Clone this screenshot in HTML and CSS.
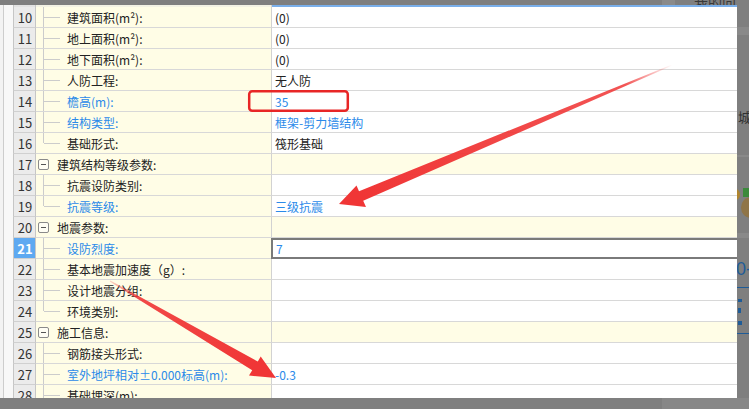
FILE: index.html
```html
<!DOCTYPE html>
<html lang="zh-CN">
<head>
<meta charset="utf-8">
<title>工程信息</title>
<link rel="stylesheet" href="styles.css">
</head>
<body>
<div class="backdrop">
  <div class="bg-top-block"></div>
  <span class="bg-title">我的问题</span>
  <div class="bg-band b1"></div>
  <span class="bg-glyph">城</span>
  <div class="bg-band b2"></div>
  <div class="bg-orange"></div>
  <div class="bg-green"></div>
  <div class="bg-brown"></div>
  <div class="bg-band b3"></div>
  <span class="bg-blue-text">0-</span>
  <div class="bg-line l1"></div>
  <div class="bg-icon i1"></div>
  <div class="bg-icon i2"></div>
  <div class="bg-icon i3"></div>
  <div class="bg-line l2"></div>
  <div class="bg-bottom"></div>
</div>

<div class="dialog">
  <div class="gutter"></div>
  <div class="sheet">
    <div class="row strip"><div class="num"></div><div class="label"></div><div class="value"></div></div>

    <div class="row"><div class="num">10</div><div class="label"><span class="branch"></span><span class="text">建筑面积(m²):</span></div><div class="value">(0)</div></div>
    <div class="row"><div class="num">11</div><div class="label"><span class="branch"></span><span class="text">地上面积(m²):</span></div><div class="value">(0)</div></div>
    <div class="row"><div class="num">12</div><div class="label"><span class="branch"></span><span class="text">地下面积(m²):</span></div><div class="value">(0)</div></div>
    <div class="row"><div class="num">13</div><div class="label"><span class="branch"></span><span class="text">人防工程:</span></div><div class="value">无人防</div></div>
    <div class="row"><div class="num">14</div><div class="label"><span class="branch"></span><span class="text blue">檐高(m):</span></div><div class="value blue">35</div></div>
    <div class="row"><div class="num">15</div><div class="label"><span class="branch"></span><span class="text blue">结构类型:</span></div><div class="value blue">框架-剪力墙结构</div></div>
    <div class="row"><div class="num">16</div><div class="label"><span class="branch last"></span><span class="text">基础形式:</span></div><div class="value">筏形基础</div></div>

    <div class="row group"><div class="num">17</div><div class="label"><span class="toggle"></span><span class="gtext">建筑结构等级参数:</span></div><div class="value"></div></div>
    <div class="row"><div class="num">18</div><div class="label"><span class="branch"></span><span class="text">抗震设防类别:</span></div><div class="value"></div></div>
    <div class="row"><div class="num">19</div><div class="label"><span class="branch last"></span><span class="text blue">抗震等级:</span></div><div class="value blue">三级抗震</div></div>

    <div class="row group"><div class="num">20</div><div class="label"><span class="toggle"></span><span class="gtext">地震参数:</span></div><div class="value"></div></div>
    <div class="row current"><div class="num">21</div><div class="label"><span class="branch"></span><span class="text blue">设防烈度:</span></div><div class="value editing blue">7</div></div>
    <div class="row"><div class="num">22</div><div class="label"><span class="branch"></span><span class="text">基本地震加速度（g）:</span></div><div class="value"></div></div>
    <div class="row"><div class="num">23</div><div class="label"><span class="branch"></span><span class="text">设计地震分组:</span></div><div class="value"></div></div>
    <div class="row"><div class="num">24</div><div class="label"><span class="branch last"></span><span class="text">环境类别:</span></div><div class="value"></div></div>

    <div class="row group"><div class="num">25</div><div class="label"><span class="toggle"></span><span class="gtext">施工信息:</span></div><div class="value"></div></div>
    <div class="row"><div class="num">26</div><div class="label"><span class="branch"></span><span class="text">钢筋接头形式:</span></div><div class="value"></div></div>
    <div class="row"><div class="num">27</div><div class="label"><span class="branch"></span><span class="text blue">室外地坪相对±0.000标高(m):</span></div><div class="value blue">-0.3</div></div>
    <div class="row"><div class="num">28</div><div class="label"><span class="branch"></span><span class="text">基础埋深(m):</span></div><div class="value"></div></div>
  </div>
</div>

<svg class="marks" width="749" height="409" viewBox="0 0 749 409" xmlns="http://www.w3.org/2000/svg">
  <defs>
    <linearGradient id="g1" gradientUnits="userSpaceOnUse" x1="672" y1="65" x2="361" y2="196">
      <stop offset="0" stop-color="#f03636" stop-opacity="0"/>
      <stop offset="0.15" stop-color="#f03636" stop-opacity="0.85"/>
      <stop offset="1" stop-color="#f03636" stop-opacity="1"/>
    </linearGradient>
    <linearGradient id="g2" gradientUnits="userSpaceOnUse" x1="110" y1="281" x2="255" y2="366">
      <stop offset="0" stop-color="#f03636" stop-opacity="0.2"/>
      <stop offset="0.2" stop-color="#f03636" stop-opacity="0.9"/>
      <stop offset="1" stop-color="#f03636" stop-opacity="1"/>
    </linearGradient>
  </defs>
  <rect x="249.2" y="91.2" width="98.6" height="19.6" rx="3" ry="3" fill="none" stroke="#e82626" stroke-width="2.5"/>
  <polygon fill="url(#g1)" points="339,204 356.5,185.5 359,191.2 672,64.5 672.4,65.5 363.2,200.8 366,207"/>
  <polygon fill="url(#g2)" points="276,378 260.7,356.5 257.8,361.6 110.3,280.5 109.7,281.5 252.2,370.3 249,375.5"/>
</svg>
</body>
</html>
```

FILE: styles.css
```css
* { box-sizing: border-box; }

html, body {
  margin: 0;
  padding: 0;
}

body {
  width: 749px;
  height: 409px;
  overflow: hidden;
  position: relative;
  background: #7f7f7f;
  font-family: "Noto Sans CJK SC", "Noto Sans", sans-serif;
  color: #222;
}

/* dimmed application behind the dialog */
.backdrop .bg-top-block { position: absolute; left: 662px; top: 0; width: 13px; height: 5px; background: #8a8a8a; }
.backdrop .bg-title { position: absolute; left: 694px; top: -6px; font-size: 14px; line-height: 16px; color: #383838; }
.backdrop .bg-band { position: absolute; left: 737px; width: 12px; background: #898989; }
.backdrop .b1 { top: 27px; height: 8px; }
.backdrop .b2 { top: 155px; height: 2px; }
.backdrop .b3 { top: 233px; height: 5px; }
.backdrop .bg-glyph { position: absolute; left: 738px; top: 109px; font-size: 13px; line-height: 16px; color: #2f2f2f; }
.backdrop .bg-orange { position: absolute; left: 727px; top: 188px; width: 13px; height: 13px; border-radius: 50%; background: #b0852e; }
.backdrop .bg-green { position: absolute; left: 743px; top: 188px; width: 7px; height: 9px; background: #3b8a3b; }
.backdrop .bg-brown { position: absolute; left: 741px; top: 197px; width: 20px; height: 21px; border-radius: 50%; background: #8f7548; }
.backdrop .bg-blue-text { position: absolute; left: 736px; top: 258px; font-size: 18px; line-height: 22px; color: #1f5c97; font-family: "Liberation Sans", sans-serif; }
.backdrop .bg-line { position: absolute; left: 737px; width: 12px; height: 1px; background: #1f5c97; }
.backdrop .l1 { top: 287px; }
.backdrop .l2 { top: 333px; }
.backdrop .bg-icon { position: absolute; left: 738px; width: 4px; height: 3px; background: #1f5c97; }
.backdrop .i1 { top: 299px; }
.backdrop .i2 { top: 308px; width: 3px; height: 5px; }
.backdrop .i3 { top: 321px; height: 4px; }
.backdrop .bg-bottom { position: absolute; left: 662px; top: 398px; width: 87px; height: 11px; background: #878787; }

/* dialog */
.dialog {
  position: relative;
  z-index: 1;
  margin-top: 5px;
  width: 737px;
  height: 393px;
  display: flex;
  background: #fff;
  overflow: hidden;
}

.gutter {
  width: 13px;
  flex: none;
  background: linear-gradient(to right, #f3f3f3 0 3px, #cdcdcd 3px 4px, #f8f8f8 4px 100%);
}

.sheet {
  flex: 1;
  display: flex;
  flex-direction: column;
  min-width: 0;
}

.row {
  display: grid;
  grid-template-columns: 23px 236px 1fr;
  height: 21px;
  flex: none;
}

.num {
  background: #ebebeb;
  border-left: 1px solid #c6c6c6;
  border-right: 1px solid #c6c6c6;
  border-bottom: 1px solid #d0d0d0;
  display: flex;
  align-items: center;
  justify-content: center;
  font-size: 13px;
  color: #333;
  padding-left: 1px;
}

.label {
  background: #fffde6;
  border-right: 1px solid #d2d2d2;
  border-bottom: 1px solid #d8d8d8;
  display: flex;
  align-items: center;
  font-size: 12px;
  white-space: nowrap;
}

.value {
  border-bottom: 1px solid #d8d8d8;
  display: flex;
  align-items: center;
  padding-left: 3px;
  font-size: 12px;
  color: #222;
  white-space: nowrap;
}

.blue, .value.blue { color: #2b8ae9; }

.branch {
  width: 24px;
  align-self: stretch;
  flex: none;
  background:
    linear-gradient(#cccccc, #cccccc) 7px 0 / 1px 100% no-repeat,
    linear-gradient(#cccccc, #cccccc) 8px 50% / 16px 1px no-repeat;
}

.branch.last {
  background:
    linear-gradient(#cccccc, #cccccc) 7px 0 / 1px 50% no-repeat,
    linear-gradient(#cccccc, #cccccc) 8px 50% / 16px 1px no-repeat;
}

.text { margin-left: 7px; }

.toggle {
  width: 11px;
  height: 11px;
  margin-left: 2px;
  flex: none;
  border: 1px solid #8a8a8a;
  border-radius: 2px;
  background: linear-gradient(#555, #555) 50% 50% / 5px 1px no-repeat #fffef4;
}

.gtext { margin-left: 8px; }

.row.group .value { background: #fffde6; }

.row.current .num {
  background: #5ea9f1;
  color: #fff;
  font-weight: bold;
}

.value.editing {
  margin-left: -1px;
  border: 2px solid #7a7a7a;
  border-right: none;
  padding-left: 3px;
}

/* partially visible row above row 10 */
.row.strip { height: 2px; }
.strip .num { background: #e2e2e2; border-bottom: none; }
.strip .label { background: #f3f2e4; border-bottom: none; }
.strip .value { background: #7aafea; border-bottom: none; }

/* annotation overlay */
.marks {
  position: absolute;
  left: 0;
  top: 0;
  z-index: 2;
  pointer-events: none;
}
```
